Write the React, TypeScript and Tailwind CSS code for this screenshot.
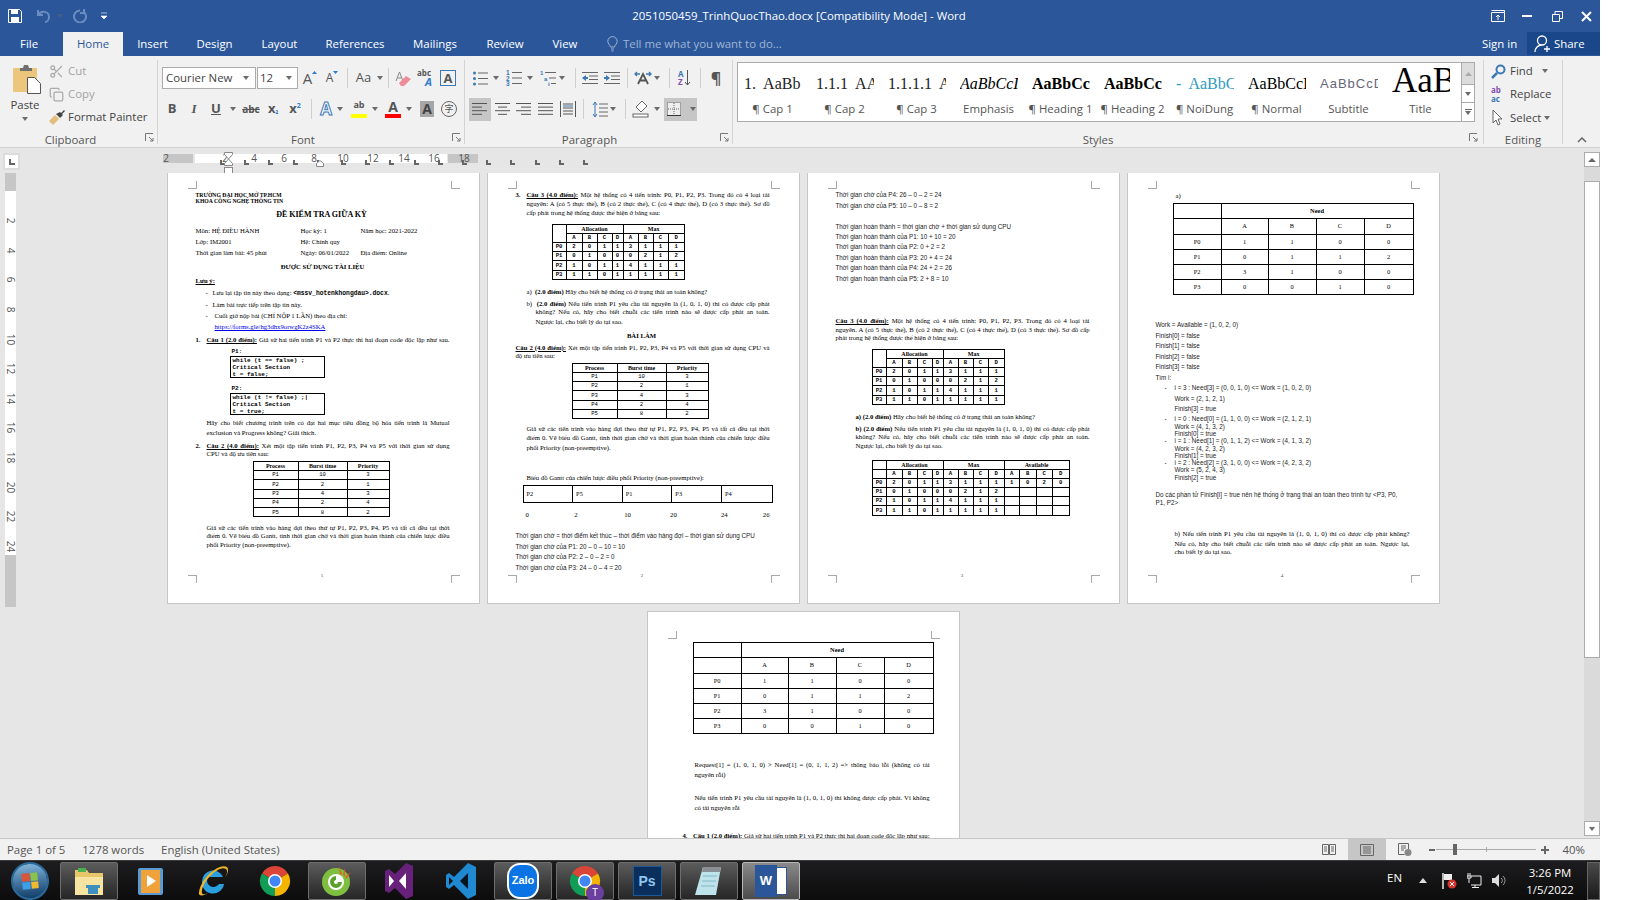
import React from "react";
import { Scissors, Copy } from "lucide-react";

const ui = "font-['Open_Sans','Liberation_Sans',sans-serif]";

const Caret = ({ className = "" }: { className?: string }) => (
  <svg width="8" height="4" viewBox="0 0 8 4" className={`shrink-0 ${className}`}>
    <path d="M1 0h6L4 4z" fill="#6b6b6b" />
  </svg>
);

const Divider = ({ className = "" }: { className?: string }) => (
  <div className={`w-px h-[20px] bg-[#cfcfcf] shrink-0 ${className}`} />
);

const Launcher = ({ className = "" }: { className?: string }) => (
  <svg width="9" height="9" viewBox="0 0 9 9" className={`absolute bottom-[2px] ${className}`}>
    <path d="M.5 8V.5H8M4 4l4 4M8 5v3H5" fill="none" stroke="#777" />
  </svg>
);

const Lines = ({ rows, className = "" }: { rows: number[][]; className?: string }) => (
  <svg width="16" height="14" viewBox="0 0 16 14" className={`shrink-0 ${className}`}>
    {rows.map((r, i) => (
      <line key={i} x1={r[0]} x2={r[1]} y1={1.5 + i * 3.6} y2={1.5 + i * 3.6} stroke="#555" />
    ))}
  </svg>
);

const ListIcon = ({ className = "" }: { className?: string }) => (
  <svg width="16" height="15" viewBox="0 0 16 15" className={`shrink-0 ${className}`}>
    {[2, 7.5, 13].map((y) => (
      <React.Fragment key={y}>
        <circle cx="2.5" cy={y} r="1.5" fill="#3c78b4" />
        <line x1="6" x2="16" y1={y} y2={y} stroke="#666" />
      </React.Fragment>
    ))}
  </svg>
);

const NumListIcon = ({ className = "" }: { className?: string }) => (
  <svg width="16" height="16" viewBox="0 0 16 16" className={`shrink-0 ${className}`}>
    {[
      { y: 2.5, t: "1" },
      { y: 8, t: "2" },
      { y: 13.5, t: "3" },
    ].map((r) => (
      <React.Fragment key={r.t}>
        <text x="0" y={r.y + 2.5} fontSize="6.5" fontWeight="700" fill="#3c78b4" fontFamily="Liberation Sans">{r.t}</text>
        <line x1="6" x2="16" y1={r.y} y2={r.y} stroke="#666" />
      </React.Fragment>
    ))}
  </svg>
);

const MultiListIcon = ({ className = "" }: { className?: string }) => (
  <svg width="16" height="16" viewBox="0 0 16 16" className={`shrink-0 ${className}`}>
    <text x="0" y="5" fontSize="6" fontWeight="700" fill="#3c78b4" fontFamily="Liberation Sans">1</text>
    <text x="4" y="10.500" fontSize="6" fontWeight="700" fill="#3c78b4" fontFamily="Liberation Sans">a</text>
    <text x="8" y="16" fontSize="6" fontWeight="700" fill="#3c78b4" fontFamily="Liberation Sans">i</text>
    <path d="M5 2.500h11M9 8h7M11 13.500h5" stroke="#666" />
  </svg>
);

const IndentIcon = ({ flip = false, className = "" }: { flip?: boolean; className?: string }) => (
  <svg width="16" height="14" viewBox="0 0 16 14" className={`shrink-0 ${className}`}>
    <path d="M0 1.500h16M7 5h9M7 8.500h9M0 12.500h16" stroke="#666" />
    {flip ? (
      <path d="M0 7l4-3v2h2v2H4v2z" fill="#3c78b4" />
    ) : (
      <path d="M6 7L2 4v2H0v2h2v2z" fill="#3c78b4" />
    )}
  </svg>
);

const TitleBar = () => (
  <div className={`relative h-[32px] flex items-center bg-[#2b579a] text-white ${ui}`}>
    <svg width="14" height="14" viewBox="0 0 14 14" className="ml-[8px]">
      <path d="M.5.5h11l2 2v11H.5z" fill="none" stroke="#fff" />
      <path d="M3 1h7v4H3zM3 8h8v5H3z" fill="#fff" />
    </svg>
    <svg width="17" height="14" viewBox="0 0 17 14" className="ml-[14px]">
      <path d="M2 6c3-5 11-4 11 2 0 3-2 5-4 5M2 1v5h5" fill="none" stroke="#6a8cc0" strokeWidth="2" />
    </svg>
    <Caret className="ml-[3px] opacity-40" />
    <svg width="14" height="14" viewBox="0 0 14 14" className="ml-[9px]">
      <path d="M11 3a6 6 0 1 1-4-1.5M11 0v4H7" fill="none" stroke="#6a8cc0" strokeWidth="2" />
    </svg>
    <svg width="8" height="8" viewBox="0 0 8 8" className="ml-[13px]">
      <path d="M1 1h6M1 4h6L4 7z" fill="#fff" stroke="#fff" strokeWidth=".6" />
    </svg>
    <div className="absolute left-[631px] w-[336px] text-center text-[11.4px] whitespace-nowrap">
      2051050459_TrinhQuocThao.docx [Compatibility Mode] - Word
    </div>
    <div className="ml-auto flex items-center">
      <svg width="14" height="12" viewBox="0 0 14 12">
        <path d="M.5 2.5h13v9H.5zM.5.5h13v2M7 10V5M5 7l2-2 2 2" fill="none" stroke="#fff" />
      </svg>
      <div className="ml-[17px] w-[10px] h-[2px] bg-white" />
      <svg width="11" height="11" viewBox="0 0 11 11" className="ml-[20px]">
        <path d="M.5 3.5h7v7h-7zM3 3V.5h7.5v7H8" fill="none" stroke="#fff" />
      </svg>
      <svg width="11" height="11" viewBox="0 0 11 11" className="ml-[18px] mr-[8px]">
        <path d="M1 1l9 9M10 1l-9 9" stroke="#fff" strokeWidth="2" />
      </svg>
    </div>
  </div>
);

const tabs = [
  { name: "Insert", w: "w-[59px]" },
  { name: "Design", w: "w-[65px]" },
  { name: "Layout", w: "w-[65px]" },
  { name: "References", w: "w-[86px]" },
  { name: "Mailings", w: "w-[74px]" },
  { name: "Review", w: "w-[66px]" },
  { name: "View", w: "w-[54px]" },
];

const TabBar = () => (
  <div className={`h-[24px] flex items-stretch bg-[#2b579a] text-white text-[11.4px] ${ui}`}>
    <div className="w-[63px] pl-[20px] flex items-center">File</div>
    <div className="w-[60px] bg-[#f1f1f1] text-[#2b579a] flex items-center justify-center">Home</div>
    {tabs.map((t) => (
      <div key={t.name} className={`${t.w} flex items-center justify-center`}>
        {t.name}
      </div>
    ))}
    <div className="ml-[15px] flex items-center text-[#9fb5d4]">
      <svg width="11" height="16" viewBox="0 0 11 16">
        <path d="M3.5 11C3 8.500.8 8 .8 5.300a4.700 4.700 0 0 1 9.400 0C10.200 8 8 8.500 7.500 11zM4 13h3M4.500 15h2" fill="none" stroke="#9fb5d4" />
      </svg>
      <span className="ml-[5px]">Tell me what you want to do...</span>
    </div>
    <div className="ml-auto w-[45px] flex items-center">Sign in</div>
    <div className="w-[73px] mb-px bg-[#19478a] flex items-center pl-[7px]">
      <svg width="16" height="18" viewBox="0 0 16 18">
        <path d="M8 1a4 4 0 0 1 0 9 4 4 0 0 1 0-9zM1 17c0-4 3-7 7-7M10 14h6M13 11v6" fill="none" stroke="#fff" strokeWidth="1.300" />
      </svg>
      <span className="ml-[4px]">Share</span>
    </div>
  </div>
);

const Clipboard = () => (
  <div className="relative w-[158px] border-r border-[#d4d4d4] mt-[4px] h-[84px] flex flex-col shrink-0">
    <div className="h-[72px] flex text-[11.4px] text-[#444]">
      <div className="w-[49px] flex flex-col items-center pt-[4px]">
        <svg width="29" height="30" viewBox="0 0 29 30" className="ml-[4px]">
          <rect x="1" y="4" width="24" height="24" rx="1" fill="#edc67e" />
          <path d="M8 4h3l1-3h4l1 3h3v3H8z" fill="#6f6f6f" />
          <path d="M15.500 13.500h7l6 6v10h-13z" fill="#fff" stroke="#555" />
        </svg>
        <span className="mt-[2px] leading-[17px] ml-[1px]">Paste</span>
        <Caret className="mt-[4px]" />
      </div>
      <div className="flex flex-col">
        <div className="h-[22px] flex items-center text-[#a3a3a3]">
          <Scissors size={15} className="w-[15px] text-[#aaa]" />
          <span className="ml-[4px]">Cut</span>
        </div>
        <div className="h-[24px] flex items-center text-[#a3a3a3]">
          <Copy size={15} className="text-[#aaa]" />
          <span className="ml-[4px]">Copy</span>
        </div>
        <div className="h-[22px] flex items-center">
          <svg width="16" height="15" viewBox="0 0 16 15">
            <path d="M0 11l6-6 4 4-6 6z" fill="#e3bd7c" />
            <path d="M7 4l4 4 3-3-1-1 3-3-1-1-3 3-1-1z" fill="#444" />
          </svg>
          <span className="ml-[3px] whitespace-nowrap">Format Painter</span>
        </div>
      </div>
    </div>
    <div className="h-[12px] leading-[16px] text-center text-[11.4px] text-[#555] pr-[16px]">Clipboard</div>
    <Launcher className="right-[3px]" />
  </div>
);

const FontGroup = () => (
  <div className="relative w-[307px] border-r border-[#d4d4d4] mt-[4px] h-[84px] flex flex-col shrink-0 text-[#555]">
    <div className="h-[72px] pt-[7px]">
      <div className="h-[22px] flex items-center pl-[4px]">
        <div className="w-[94px] h-[22px] bg-white border border-[#ababab] flex items-center px-[3px] text-[11.4px] text-[#444]">
          <span>Courier New</span>
          <Caret className="ml-auto mr-[2px]" />
        </div>
        <div className="ml-px w-[41px] h-[22px] bg-white border border-[#ababab] flex items-center px-[2px] text-[11.4px] text-[#444]">
          <span>12</span>
          <Caret className="ml-auto mr-[2px]" />
        </div>
        <div className="ml-[2px] w-[20px] flex items-start justify-center">
          <span className="text-[15px] leading-[18px]">A</span>
          <svg width="5" height="3" viewBox="0 0 5 3" className="mt-[2px]"><path d="M0 3l2.500-3L5 3z" fill="#2b7cd3" /></svg>
        </div>
        <div className="ml-[2px] w-[20px] flex items-start justify-center">
          <span className="text-[12px] leading-[18px]">A</span>
          <svg width="5" height="3" viewBox="0 0 5 3" className="mt-[2px]"><path d="M0 0h5L2.500 3z" fill="#2b7cd3" /></svg>
        </div>
        <Divider className="ml-[5px]" />
        <div className="ml-[4px] w-[23px] text-center text-[13px]">Aa</div>
        <Caret className="ml-px" />
        <Divider className="ml-[4px]" />
        <svg width="18" height="17" viewBox="0 0 18 17" className="ml-[6px]">
          <path d="M1 11L4.500 2 8 11M2.500 8h4" fill="none" stroke="#888" />
          <path d="M4 13l7-7 5 3-7 7H6z" fill="#f08c9a" />
        </svg>
        <div className="ml-[4px] w-[18px] h-[18px] flex flex-col items-start font-bold">
          <span className="text-[8px] leading-[8px]">abc</span>
          <span className="ml-[8px] text-[11px] leading-[10px] italic text-[#2b7cd3]">A</span>
        </div>
        <div className="ml-[5px] w-[16px] h-[16px] border border-[#3c78b4] text-[13px] leading-[14px] text-center font-bold">A</div>
      </div>
      <div className="mt-[9px] h-[22px] flex items-center pl-[7px] font-bold text-[13px]">
        <div className="w-[14px] text-center">B</div>
        <div className="ml-[8px] w-[14px] text-center italic font-['Liberation_Serif']">I</div>
        <div className="ml-[8px] w-[14px] text-center underline">U</div>
        <Caret className="ml-[6px]" />
        <div className="ml-[5px] w-[18px] text-center text-[10px] line-through">abc</div>
        <div className="ml-[5px] w-[16px] text-center">
          x<span className="text-[7px] text-[#2b7cd3]">₂</span>
        </div>
        <div className="ml-[6px] w-[16px] text-center">
          x<span className="text-[7px] align-super text-[#2b7cd3]">2</span>
        </div>
        <Divider className="ml-[8px]" />
        <div className="ml-[5px] w-[18px] text-center text-[17px] text-white [-webkit-text-stroke:1px_#3c78b4]">A</div>
        <Caret className="ml-px" />
        <div className="ml-[6px] w-[18px] relative h-[20px] text-[9px] leading-[11px] text-center">
          ab
          <div className="absolute left-[1px] right-[1px] bottom-[1px] h-[4px] bg-[#ffff00]" />
        </div>
        <Caret className="ml-[3px]" />
        <div className="ml-[6px] w-[16px] relative h-[20px] text-[14px] leading-[16px] text-center">
          A
          <div className="absolute left-0 right-0 bottom-[1px] h-[4px] bg-[#ff0000]" />
        </div>
        <Caret className="ml-[4px]" />
        <div className="ml-[7px] w-[14px] h-[16px] bg-[#a6a6a6] text-[14px] leading-[16px] text-center text-[#444]">A</div>
        <div className="ml-[7px] w-[16px] h-[16px] rounded-full border border-[#666] text-[9px] leading-[14px] text-center font-normal font-['Noto_Sans_CJK_SC',sans-serif]">
          字
        </div>
      </div>
    </div>
    <div className="h-[12px] leading-[16px] text-center text-[11.4px] pr-[16px]">Font</div>
    <Launcher className="right-[3px]" />
  </div>
);

const ParagraphGroup = () => (
  <div className="relative w-[268px] border-r border-[#d4d4d4] mt-[4px] h-[84px] flex flex-col shrink-0 text-[#555]">
    <div className="h-[72px] pt-[7px]">
      <div className="h-[22px] flex items-center pl-[7px]">
        <ListIcon />
        <Caret className="ml-[4px]" />
        <NumListIcon className="ml-[6px]" />
        <Caret className="ml-[4px]" />
        <MultiListIcon className="ml-[6px]" />
        <Caret className="ml-[2px]" />
        <Divider className="ml-[9px]" />
        <IndentIcon flip className="ml-[6px]" />
        <IndentIcon className="ml-[6px]" />
        <Divider className="ml-[7px]" />
        <svg width="18" height="16" viewBox="0 0 18 16" className="ml-[6px]">
          <path d="M4 14L9 4l5 10M6 10.500h6" fill="none" stroke="#555" strokeWidth="1.800" />
          <path d="M1 4h5M3 2L1 4l2 2M12 4h5M15 2l2 2-2 2" fill="none" stroke="#3c78b4" strokeWidth="1.300" />
        </svg>
        <Caret className="ml-px" />
        <Divider className="ml-[8px]" />
        <div className="ml-[8px] w-[16px] flex items-center">
          <div className="text-[8px] leading-[8px] font-bold">
            <div className="text-[#3c78b4]">A</div>
            <div className="text-[#7f4fb0]">Z</div>
          </div>
          <svg width="7" height="16" viewBox="0 0 7 16">
            <path d="M3.500 0v15M1 12l2.500 3L6 12" fill="none" stroke="#555" />
          </svg>
        </div>
        <Divider className="ml-[6px]" />
        <div className="ml-[7px] w-[16px] text-[16px] font-bold text-center">¶</div>
      </div>
      <div className="mt-[9px] h-[22px] flex items-center pl-[4px]">
        <div className="w-[22px] h-[23px] bg-[#c6c6c6] flex items-center justify-center">
          <Lines rows={[[0, 15], [0, 10], [0, 15], [0, 10]]} />
        </div>
        <Lines rows={[[0, 15], [3, 12], [0, 15], [3, 12]]} className="ml-[4px]" />
        <Lines rows={[[0, 15], [5, 15], [0, 15], [5, 15]]} className="ml-[5px]" />
        <Lines rows={[[0, 15], [0, 15], [0, 15], [0, 15]]} className="ml-[6px]" />
        <svg width="16" height="16" viewBox="0 0 16 16" className="ml-[6px]">
          <path d="M.5 0v16M15.500 0v16M3 3h10M3 7h10M3 10h10M3 13h10" fill="none" stroke="#555" />
          <path d="M3 5h10" stroke="#3c78b4" />
        </svg>
        <Divider className="ml-[7px]" />
        <svg width="16" height="17" viewBox="0 0 16 17" className="ml-[8px]">
          <path d="M3 1v15M1 4l2-3 2 3M1 13l2 3 2-3" fill="none" stroke="#3c78b4" />
          <path d="M7 3h9M7 7h9M7 11h9M7 15h9" stroke="#666" />
        </svg>
        <Caret className="ml-px" />
        <Divider className="ml-[8px]" />
        <svg width="18" height="18" viewBox="0 0 18 18" className="ml-[6px]">
          <path d="M4 7l6-6 5 5-6 6z" fill="#fff" stroke="#666" />
          <rect x="1" y="14" width="15" height="3" fill="#fff" stroke="#666" />
        </svg>
        <Caret className="ml-[3px]" />
        <div className="ml-[3px] w-[33px] h-[23px] bg-[#c6c6c6] flex items-center pl-[3px]">
          <svg width="14" height="14" viewBox="0 0 14 14">
            <rect x=".5" y=".5" width="13" height="13" fill="#eee" stroke="#666" strokeDasharray="1 1" />
            <path d="M7 1v12M1 7h12" stroke="#666" strokeDasharray="1 1" />
            <path d="M0 13.500h14" stroke="#333" />
          </svg>
          <Caret className="ml-[8px]" />
        </div>
      </div>
    </div>
    <div className="h-[12px] leading-[16px] text-center text-[11.4px] pr-[18px]">Paragraph</div>
    <Launcher className="right-[3px]" />
  </div>
);

const styleItems = [
  { label: "¶ Cap 1", prev: "1.  AaBb", cls: "text-[#222] text-[16px] leading-[42px] font-['Liberation_Serif']" },
  { label: "¶ Cap 2", prev: "1.1.1  AA", cls: "text-[#222] text-[16px] leading-[42px] font-['Liberation_Serif']" },
  { label: "¶ Cap 3", prev: "1.1.1.1  A", cls: "text-[#222] text-[16px] leading-[42px] font-['Liberation_Serif']" },
  { label: "Emphasis", prev: "AaBbCcI", cls: "text-black text-[16px] leading-[42px] italic font-['Liberation_Serif']" },
  { label: "¶ Heading 1", prev: "AaBbCcl", cls: "text-black text-[16px] leading-[42px] font-bold font-['Liberation_Serif']" },
  { label: "¶ Heading 2", prev: "AaBbCcl", cls: "text-black text-[16px] leading-[42px] font-bold font-['Liberation_Serif']" },
  { label: "¶ NoiDung", prev: "-  AaBbC", cls: "text-[#2e9bbf] text-[16px] leading-[42px] font-['Liberation_Serif']" },
  { label: "¶ Normal", prev: "AaBbCcI", cls: "text-black text-[16px] leading-[42px] font-['Liberation_Serif']" },
  { label: "Subtitle", prev: "AaBbCcD", cls: "text-[#66667a] text-[13px] leading-[42px] tracking-[1px] font-['Liberation_Sans']" },
  { label: "Title", prev: "AaB", cls: "text-black text-[35px] leading-[36px] font-['Liberation_Serif']" },
];

const StylesGroup = () => (
  <div className="relative w-[751px] border-r border-[#d4d4d4] mt-[4px] h-[84px] flex flex-col shrink-0">
    <div className="h-[72px] pl-[4px] pt-[2px]">
      <div className="w-[738px] h-[60px] bg-white border border-[#ababab] flex">
        <div className="w-[723px] flex shrink-0">
          {styleItems.map((s) => (
            <div key={s.label} className="w-[72px] shrink-0 flex flex-col">
              <div className={`ml-[6px] w-[58px] h-[36px] overflow-hidden whitespace-pre ${s.cls}`}>{s.prev}</div>
              <div className="mt-[1px] pr-[3px] text-center text-[11.4px] leading-[18px] text-[#555] whitespace-nowrap">{s.label}</div>
            </div>
          ))}
        </div>
        <div className="w-[14px] flex flex-col border-l border-[#ababab]">
          <div className="h-[21px] bg-[#dcdcdc] flex items-center justify-center">
            <svg width="7" height="4" viewBox="0 0 7 4"><path d="M0 4l3.500-4L7 4z" fill="#aaa" /></svg>
          </div>
          <div className="h-[19px] border-y border-[#ababab] flex items-center justify-center">
            <Caret />
          </div>
          <div className="h-[18px] flex flex-col items-center justify-center">
            <div className="w-[7px] h-px bg-[#666] mb-px" />
            <Caret />
          </div>
        </div>
      </div>
    </div>
    <div className="h-[12px] leading-[16px] text-center text-[11.4px] text-[#555] pr-[20px]">Styles</div>
    <Launcher className="right-[5px]" />
  </div>
);

const EditingGroup = () => (
  <div className="w-[79px] border-r border-[#d4d4d4] mt-[4px] h-[84px] flex flex-col shrink-0 text-[11.4px] text-[#444]">
    <div className="h-[72px] pl-[7px]">
      <div className="h-[22px] flex items-center">
        <svg width="15" height="15" viewBox="0 0 15 15">
          <circle cx="9.500" cy="5.500" r="4" fill="none" stroke="#3c78b4" strokeWidth="2" />
          <path d="M6 9l-5 5" stroke="#3c78b4" strokeWidth="2.500" />
        </svg>
        <span className="ml-[4px]">Find</span>
        <Caret className="ml-[8px]" />
      </div>
      <div className="h-[24px] flex items-center">
        <div className="w-[16px] text-[8px] leading-[9px] font-bold">
          <div className="text-[#7f4fb0]">ab</div>
          <div className="text-[#3c78b4]">ac</div>
        </div>
        <span className="ml-[3px]">Replace</span>
      </div>
      <div className="h-[23px] flex items-center">
        <svg width="14" height="17" viewBox="0 0 14 17" className="ml-px">
          <path d="M1 1v13l3-3 2 5 2-1-2-5h4z" fill="#fff" stroke="#666" />
        </svg>
        <span className="ml-[4px]">Select</span>
        <Caret className="ml-[2px]" />
      </div>
    </div>
    <div className="h-[12px] leading-[16px] text-center text-[#555]">Editing</div>
  </div>
);

const Ribbon = () => (
  <div className={`h-[92px] flex bg-[#f1f1f1] border-b border-[#d2d2d2] ${ui}`}>
    <Clipboard />
    <FontGroup />
    <ParagraphGroup />
    <StylesGroup />
    <EditingGroup />
    <div className="flex-1 flex items-end justify-center pb-[4px]">
      <svg width="10" height="6" viewBox="0 0 10 6">
        <path d="M1 5l4-4 4 4" fill="none" stroke="#666" strokeWidth="1.500" />
      </svg>
    </div>
  </div>
);

const rulerNums = [
  { t: "2", x: 3 }, { t: "2", x: 62 }, { t: "4", x: 91 }, { t: "6", x: 121 }, { t: "8", x: 151 },
  { t: "10", x: 180 }, { t: "12", x: 210 }, { t: "14", x: 241 }, { t: "16", x: 271 }, { t: "18", x: 301 },
];
const tabStops = Array.from({ length: 16 }, (_, i) => 57 + i * 24.2);

const HRuler = () => (
  <div className="h-[25px] flex shrink-0">
    <div className="ml-[3px] mt-[5px] w-[17px] h-[17px] bg-white border-[2px] border-[#dcdcdc] flex items-center justify-center">
      <div className="w-[6px] h-[6px] border-l-2 border-b-2 border-[#666]" />
    </div>
    <div className={`relative ml-[143px] mt-[6px] h-[9px] w-[315px] flex text-[10px] text-[#555] ${ui}`}>
      <div className="w-[30px] bg-[#c6c6c6]" />
      <div className="ml-[2px] w-[252px] bg-white" />
      <div className="ml-px w-[30px] bg-[#c6c6c6]" />
      {rulerNums.map((n, i) => (
        <span key={i} className="absolute top-[-3px] leading-[14px] -translate-x-1/2" style={{ left: n.x }}>
          {n.t}
        </span>
      ))}
      {tabStops.map((x) => (
        <div key={x} className="absolute top-[6px] w-[5px] h-[5px] border-l-2 border-b-2 border-[#666]" style={{ left: x }} />
      ))}
      <svg width="14" height="22" viewBox="0 0 14 22" className="absolute left-[60px] -top-[2px]">
        <path d="M1.500.500h8v2L5.500 7l-4-4.500zM5.500 7l4 4.500v2h-8v-2z" fill="#fff" stroke="#888" />
        <rect x="1.500" y="15.500" width="8" height="6" fill="#fff" stroke="#888" />
      </svg>
      <svg width="9" height="7" viewBox="0 0 9 7" className="absolute left-[153px] top-[6px]">
        <path d="M.500 6.500v-3l3.500-3 3.500 3v3z" fill="#fff" stroke="#888" />
      </svg>
    </div>
  </div>
);

const VRuler = () => (
  <div className={`ml-[5px] w-[11px] h-[434px] shrink-0 flex flex-col bg-white text-[10px] text-[#555] ${ui}`}>
    <div className="h-[18px] bg-[#c6c6c6]" />
    <div className="h-[364px] pt-[15px]">
      {[2, 4, 6, 8, 10, 12, 14, 16, 18, 20, 22, 24].map((n) => (
        <div key={n} className="h-[29.6px] flex items-center justify-center">
          <span className="rotate-90 whitespace-nowrap">{n}</span>
        </div>
      ))}
    </div>
    <div className="h-[52px] bg-[#c6c6c6]" />
  </div>
);

const CropMarks = () => (
  <>
    <div className="absolute left-[20px] top-[8px] w-[9px] h-[8px] border-r border-b border-[#a8a8a8]" />
    <div className="absolute left-[283px] top-[8px] w-[9px] h-[8px] border-l border-b border-[#a8a8a8]" />
    <div className="absolute left-[20px] top-[402px] w-[9px] h-[8px] border-r border-t border-[#a8a8a8]" />
    <div className="absolute left-[283px] top-[402px] w-[9px] h-[8px] border-l border-t border-[#a8a8a8]" />
  </>
);

const Line = ({ className = "", children }: { className?: string; children: React.ReactNode }) => (
  <div className={`h-[6px] leading-[6px] whitespace-nowrap shrink-0 ${className}`}>{children}</div>
);

// justified body line, Word spreads these out to the right margin
const Just = ({ className = "", children }: { className?: string; children: React.ReactNode }) => (
  <div className={`h-[6px] leading-[6px] text-justify [text-align-last:justify] shrink-0 ${className}`}>{children}</div>
);

const Sans = ({ className = "", children }: { className?: string; children: React.ReactNode }) => (
  <Line className={`font-['Liberation_Sans'] text-[6.300px] text-[#222] ${className}`}>{children}</Line>
);

const PageNum = ({ n }: { n: number }) => (
  <div className="mt-auto mb-[24px] h-[6px] leading-[6px] text-center text-[5px] text-[#444] -ml-[1px]">{n}</div>
);

const Page = ({ className = "", children }: { className?: string; children: React.ReactNode }) => (
  <div className={`relative w-[313px] h-[431px] bg-white border-r border-b border-l border-[#c6c6c6] overflow-hidden flex flex-col pl-[28px] pr-[29px] shrink-0 font-['Liberation_Serif'] text-[6.700px] text-black ${className}`}>
    {children}
  </div>
);

const Td = ({ className = "", children, ...rest }: React.TdHTMLAttributes<HTMLTableCellElement>) => (
  <td className={`border border-black p-0 text-center align-middle leading-none ${className}`} {...rest}>
    {children}
  </td>
);

const procRows = [
  ["P1", "10", "3"],
  ["P2", "2", "1"],
  ["P3", "4", "3"],
  ["P4", "2", "4"],
  ["P5", "8", "2"],
];

const ProcTable = ({ className = "" }: { className?: string }) => (
  <table className={`table-fixed border-collapse w-[136px] shrink-0 border-[1.5px] border-black ${className}`}>
    <colgroup>
      <col className="w-[45px]" />
      <col className="w-[49px]" />
      <col className="w-[42px]" />
    </colgroup>
    <tbody>
      <tr className="h-[9px] font-bold text-[6px]">
        <Td>Process</Td>
        <Td>Burst time</Td>
        <Td>Priority</Td>
      </tr>
      {procRows.map((r) => (
        <tr key={r[0]} className="h-[9.3px] text-[5.600px] font-['Liberation_Mono']">
          {r.map((c, i) => (
            <Td key={i}>{c}</Td>
          ))}
        </tr>
      ))}
    </tbody>
  </table>
);

const allocRows = [
  ["P0", "2", "0", "1", "1", "3", "1", "1", "1"],
  ["P1", "0", "1", "0", "0", "0", "2", "1", "2"],
  ["P2", "1", "0", "1", "1", "4", "1", "1", "1"],
  ["P3", "1", "1", "0", "1", "1", "1", "1", "1"],
];
const avail = [["1", "0", "2", "0"], ["", "", "", ""], ["", "", "", ""], ["", "", "", ""]];

const AllocTable = ({ withAvail = false, className = "" }: { withAvail?: boolean; className?: string }) => (
  <table className={`table-fixed border-collapse shrink-0 border-[1.5px] border-black ${withAvail ? "w-[197px]" : "w-[132px]"} ${className}`}>
    <colgroup>
      <col className="w-[14px]" />
      <col className="w-[16px]" />
      <col className="w-[15px]" />
      <col className="w-[15px]" />
      <col className="w-[11px]" />
      <col className="w-[15px]" />
      <col className="w-[15px]" />
      <col className="w-[15px]" />
      <col className="w-[16px]" />
      {withAvail && (
        <>
          <col className="w-[15px]" />
          <col className="w-[17px]" />
          <col className="w-[16px]" />
          <col className="w-[17px]" />
        </>
      )}
    </colgroup>
    <tbody>
      <tr className="h-[9px] font-bold text-[6px]">
        {withAvail ? <Td /> : <Td rowSpan={2} />}
        <Td colSpan={4}>Allocation</Td>
        <Td colSpan={4}>Max</Td>
        {withAvail && <Td colSpan={4}>Available</Td>}
      </tr>
      <tr className="h-[9px] font-bold text-[5.600px] font-['Liberation_Mono']">
        {withAvail && <Td />}
        {["A", "B", "C", "D", "A", "B", "C", "D"].map((c, i) => (
          <Td key={i}>{c}</Td>
        ))}
        {withAvail && ["A", "B", "C", "D"].map((c) => <Td key={c}>{c}</Td>)}
      </tr>
      {allocRows.map((r, ri) => (
        <tr key={r[0]} className="h-[9.2px] text-[5.600px] font-['Liberation_Mono'] font-bold">
          {r.map((c, i) => (
            <Td key={i}>{c}</Td>
          ))}
          {withAvail && avail[ri].map((c, i) => <Td key={i}>{c}</Td>)}
        </tr>
      ))}
    </tbody>
  </table>
);

const needRows = [
  ["P0", "1", "1", "0", "0"],
  ["P1", "0", "1", "1", "2"],
  ["P2", "3", "1", "0", "0"],
  ["P3", "0", "0", "1", "0"],
];

const NeedTable = ({ className = "" }: { className?: string }) => (
  <table className={`table-fixed border-collapse w-[240px] shrink-0 border-[1.5px] border-black text-[6.400px] ${className}`}>
    <colgroup>
      <col className="w-[48px]" />
      <col className="w-[47px]" />
      <col className="w-[48px]" />
      <col className="w-[48px]" />
      <col className="w-[49px]" />
    </colgroup>
    <tbody>
      <tr className="h-[15px]">
        <Td />
        <Td colSpan={4} className="font-bold">Need</Td>
      </tr>
      <tr className="h-[16px]">
        <Td />
        <Td>A</Td>
        <Td>B</Td>
        <Td>C</Td>
        <Td>D</Td>
      </tr>
      {needRows.map((r) => (
        <tr key={r[0]} className="h-[15px]">
          {r.map((c, i) => (
            <Td key={i}>{c}</Td>
          ))}
        </tr>
      ))}
    </tbody>
  </table>
);

const CodeBox = ({ lines, className = "" }: { lines: string[]; className?: string }) => (
  <div className={`ml-[34px] w-[95px] h-[22px] border border-black font-['Liberation_Mono'] font-bold text-[6px] pl-[2px] flex flex-col justify-center shrink-0 ${className}`}>
    {lines.map((l) => (
      <div key={l} className="h-[7px] leading-[7px] whitespace-pre">{l}</div>
    ))}
  </div>
);

const Page1 = () => (
  <Page className="pt-[19px]">
    <CropMarks />
    <Line className="font-bold text-[5.700px]">TRƯỜNG ĐẠI HỌC MỞ TP.HCM</Line>
    <Line className="font-bold text-[5.700px]">KHOA CÔNG NGHỆ THÔNG TIN</Line>
    <Line className="mt-[8px] font-bold text-center text-[8px] pr-[2px]">ĐỀ KIỂM TRA GIỮA KỲ</Line>
    <Line className="mt-[10px] flex"><span className="w-[105px]">Môn: HỆ ĐIỀU HÀNH</span><span className="w-[60px]">Học kỳ: 1</span><span>Năm học: 2021-2022</span></Line>
    <Line className="mt-[5px] flex"><span className="w-[105px]">Lớp: IM2001</span><span>Hệ: Chính quy</span></Line>
    <Line className="mt-[5px] flex"><span className="w-[105px]">Thời gian làm bài: 45 phút</span><span className="w-[60px]">Ngày: 06/01/2022</span><span>Địa điểm: Online</span></Line>
    <Line className="mt-[8px] font-bold text-center">ĐƯỢC SỬ DỤNG TÀI LIỆU</Line>
    <Line className="mt-[8px] font-bold underline">Lưu ý:</Line>
    <Line className="mt-[6px] pl-[10px] flex"><span className="w-[7px]">-</span><span>Lưu lại tập tin này theo dạng: <span className="font-['Liberation_Mono'] text-[6.300px] font-bold">&lt;mssv_hotenkhongdau&gt;.docx</span>.</span></Line>
    <Line className="mt-[6px] pl-[10px] flex"><span className="w-[7px]">-</span><span>Làm bài trực tiếp trên tập tin này.</span></Line>
    <Line className="mt-[5px] pl-[10px] flex"><span className="w-[9px]">-</span><span>Cuối giờ nộp bài (CHỈ NỘP 1 LẦN) theo địa chỉ:</span></Line>
    <Line className="mt-[5px] pl-[19px] text-[#0000ee] underline">https://forms.gle/hg3dhx9orwgK2z4SKA</Line>
    <Line className="mt-[7px] flex"><span className="w-[11px] font-bold">1.</span><Just className="flex-1"><span className="font-bold underline">Câu 1 (2.0 điểm):</span> Giả sử hai tiến trình P1 và P2 thực thi hai đoạn code độc lập như sau.</Just></Line>
    <Line className="mt-[6px] pl-[36px] font-bold font-['Liberation_Mono'] text-[6px]">P1:</Line>
    <CodeBox className="mt-[1px]" lines={["while (t == false) ;", "Critical Section", "t = false;"]} />
    <Line className="mt-[8px] pl-[36px] font-bold font-['Liberation_Mono'] text-[6px]">P2:</Line>
    <CodeBox className="mt-[1px]" lines={["while (t != false) ;|", "Critical Section", "t = true;"]} />
    <Just className="mt-[5px] ml-[11px]">Hãy cho biết chương trình trên có đạt hai mục tiêu đồng bộ hóa tiến trình là Mutual</Just>
    <Line className="mt-[4px] ml-[11px]">exclusion và Progress không? Giải thích.</Line>
    <Line className="mt-[7px] flex"><span className="w-[11px] font-bold">2.</span><Just className="flex-1"><span className="font-bold underline">Câu 2 (4.0 điểm):</span> Xét một tập tiến trình P1, P2, P3, P4 và P5 với thời gian sử dụng</Just></Line>
    <Line className="mt-[2px] ml-[11px]">CPU và độ ưu tiên sau:</Line>
    <ProcTable className="mt-[4px] ml-[57px]" />
    <Just className="mt-[8px] ml-[11px]">Giả sử các tiến trình vào hàng đợi theo thứ tự P1, P2, P3, P4, P5 và tất cả đều tại thời</Just>
    <Just className="mt-[2px] ml-[11px]">điểm 0. Vẽ biểu đồ Gantt, tính thời gian chờ và thời gian hoàn thành của chiến lược điều</Just>
    <Line className="mt-[3px] ml-[11px]">phối Priority (non-preemptive).</Line>
    <PageNum n={1} />
  </Page>
);

const Page2 = () => (
  <Page className="pt-[19px]">
    <CropMarks />
    <Line className="flex"><span className="w-[11px] font-bold">3.</span><Just className="flex-1"><span className="font-bold underline">Câu 3 (4.0 điểm):</span> Một hệ thống có 4 tiến trình: P0, P1, P2, P3. Trong đó có 4 loại tài</Just></Line>
    <Just className="mt-[3px] ml-[11px]">nguyên: A (có 5 thực thể), B (có 2 thực thể), C (có 4 thực thể), D (có 3 thực thể). Sơ đồ</Just>
    <Line className="mt-[3px] ml-[11px]">cấp phát trong hệ thống được thể hiện ở bảng sau:</Line>
    <AllocTable className="mt-[8px] ml-[36px]" />
    <Line className="mt-[9px] ml-[11px]">a)&nbsp;&nbsp;<span className="font-bold">(2.0 điểm)</span> Hãy cho biết hệ thống có ở trạng thái an toàn không?</Line>
    <Just className="mt-[6px] ml-[11px]">b)&nbsp;&nbsp;<span className="font-bold">(2.0 điểm)</span> Nếu tiến trình P1 yêu cầu tài nguyên là (1, 0, 1, 0) thì có được cấp phát</Just>
    <Just className="mt-[2px] ml-[20px]">không? Nếu có, hãy cho biết chuỗi các tiến trình nào sẽ được cấp phát an toàn.</Just>
    <Line className="mt-[4px] ml-[20px]">Ngược lại, cho biết lý do tại sao.</Line>
    <Line className="mt-[8px] font-bold text-center pr-[2px]">BÀI LÀM</Line>
    <Just className="mt-[6px]"><span className="font-bold underline">Câu 2 (4.0 điểm):</span> Xét một tập tiến trình P1, P2, P3, P4 và P5 với thời gian sử dụng CPU và</Just>
    <Line className="mt-[2px]">độ ưu tiên sau:</Line>
    <ProcTable className="mt-[4px] ml-[56px]" />
    <Just className="mt-[7px] ml-[11px]">Giả sử các tiến trình vào hàng đợi theo thứ tự P1, P2, P3, P4, P5 và tất cả đều tại thời</Just>
    <Just className="mt-[3px] ml-[11px]">điểm 0. Vẽ biểu đồ Gantt, tính thời gian chờ và thời gian hoàn thành của chiến lược điều</Just>
    <Line className="mt-[4px] ml-[11px]">phối Priority (non-preemptive).</Line>
    <Line className="mt-[24px] ml-[11px]">Biểu đồ Gantt của chiến lược điều phối Priority (non-preemptive):</Line>
    <div className="mt-[4px] ml-[7px] w-[250px] h-[18px] flex border border-black shrink-0 text-[6.400px]">
      {["P2", "P5", "P1", "P3", "P4"].map((p, i) => (
        <div key={p} className={`w-[50px] flex items-center pl-[3px] ${i < 4 ? "border-r border-black" : ""}`}>{p}</div>
      ))}
    </div>
    <Line className="mt-[9px] ml-[10px] flex">
      <span className="w-[49px]">0</span>
      <span className="w-[50px]">2</span>
      <span className="w-[46px]">10</span>
      <span className="w-[51px]">20</span>
      <span className="w-[42px]">24</span>
      <span>26</span>
    </Line>
    <Sans className="mt-[15px]">Thời gian chờ = thời điểm kết thúc – thời điểm vào hàng đợi – thời gian sử dụng CPU</Sans>
    <Sans className="mt-[5px]">Thời gian chờ của P1: 20 – 0 – 10 = 10</Sans>
    <Sans className="mt-[4px]">Thời gian chờ của P2: 2 – 0 – 2 = 0</Sans>
    <Sans className="mt-[5px]">Thời gian chờ của P3: 24 – 0 – 4 = 20</Sans>
    <PageNum n={2} />
  </Page>
);

const Page3 = () => (
  <Page className="pt-[19px]">
    <CropMarks />
    <Sans>Thời gian chờ của P4: 26 – 0 – 2 = 24</Sans>
    <Sans className="mt-[5px]">Thời gian chờ của P5: 10 – 0 – 8 = 2</Sans>
    <Sans className="mt-[15px]">Thời gian hoàn thành = thời gian chờ + thời gian sử dụng CPU</Sans>
    <Sans className="mt-[4px]">Thời gian hoàn thành của P1: 10 + 10 = 20</Sans>
    <Sans className="mt-[4px]">Thời gian hoàn thành của P2: 0 + 2 = 2</Sans>
    <Sans className="mt-[5px]">Thời gian hoàn thành của P3: 20 + 4 = 24</Sans>
    <Sans className="mt-[4px]">Thời gian hoàn thành của P4: 24 + 2 = 26</Sans>
    <Sans className="mt-[5px]">Thời gian hoàn thành của P5: 2 + 8 = 10</Sans>
    <Just className="mt-[36px]"><span className="font-bold underline">Câu 3 (4.0 điểm):</span> Một hệ thống có 4 tiến trình: P0, P1, P2, P3. Trong đó có 4 loại tài</Just>
    <Just className="mt-[3px]">nguyên. A (có 5 thực thể), B (có 2 thực thể), C (có 4 thực thể), D (có 3 thực thể). Sơ đồ cấp</Just>
    <Line className="mt-[2px]">phát trong hệ thống được thể hiện ở bảng sau:</Line>
    <AllocTable className="mt-[8px] ml-[36px]" />
    <Line className="mt-[9px] ml-[20px]"><span className="font-bold">a) (2.0 điểm)</span> Hãy cho biết hệ thống có ở trạng thái an toàn không?</Line>
    <Just className="mt-[6px] ml-[20px]"><span className="font-bold">b) (2.0 điểm)</span> Nếu tiến trình P1 yêu cầu tài nguyên là (1, 0, 1, 0) thì có được cấp phát</Just>
    <Just className="mt-[2px] ml-[20px]">không? Nếu có, hãy cho biết chuỗi các tiến trình nào sẽ được cấp phát an toàn.</Just>
    <Line className="mt-[3px] ml-[20px]">Ngược lại, cho biết lý do tại sao.</Line>
    <AllocTable withAvail className="mt-[11px] ml-[36px]" />
    <PageNum n={3} />
  </Page>
);

const Page4 = () => (
  <Page className="pt-[20px]">
    <CropMarks />
    <Line className="ml-[20px]">a)</Line>
    <NeedTable className="mt-[4px] ml-[17px]" />
    <Sans className="mt-[27px]">Work = Available = (1, 0, 2, 0)</Sans>
    <Sans className="mt-[5px]">Finish[0] = false</Sans>
    <Sans className="mt-[4px]">Finish[1] = false</Sans>
    <Sans className="mt-[5px]">Finish[2] = false</Sans>
    <Sans className="mt-[4px]">Finish[3] = false</Sans>
    <Sans className="mt-[5px]">Tìm i:</Sans>
    <Sans className="mt-[4px] ml-[9px] flex"><span className="w-[10px]">-</span>i = 3 : Need[3] = (0, 0, 1, 0) &lt;= Work = (1, 0, 2, 0)</Sans>
    <Sans className="mt-[5px] ml-[19px]">Work = (2, 1, 2, 1)</Sans>
    <Sans className="mt-[4px] ml-[19px]">Finish[3] = true</Sans>
    <Sans className="mt-[4px] ml-[9px] flex"><span className="w-[10px]">-</span>i = 0 : Need[0] = (1, 1, 0, 0) &lt;= Work = (2, 1, 2, 1)</Sans>
    <Sans className="mt-[2px] ml-[19px]">Work = (4, 1, 3, 2)</Sans>
    <Sans className="mt-[1px] ml-[19px]">Finish[0] = true</Sans>
    <Sans className="mt-[1px] ml-[9px] flex"><span className="w-[10px]">-</span>i = 1 : Need[1] = (0, 1, 1, 2) &lt;= Work = (4, 1, 3, 2)</Sans>
    <Sans className="mt-[2px] ml-[19px]">Work = (4, 2, 3, 2)</Sans>
    <Sans className="mt-[1px] ml-[19px]">Finish[1] = true</Sans>
    <Sans className="mt-[1px] ml-[9px] flex"><span className="w-[10px]">-</span>i = 2 : Need[2] = (3, 1, 0, 0) &lt;= Work = (4, 2, 3, 2)</Sans>
    <Sans className="mt-[1px] ml-[19px]">Work = (5, 2, 4, 3)</Sans>
    <Sans className="mt-[2px] ml-[19px]">Finish[2] = true</Sans>
    <Sans className="mt-[11px]">Do các phần tử Finish[i] = true nên hệ thống ở trạng thái an toàn theo trình tự &lt;P3, P0,</Sans>
    <Sans className="mt-[2px]">P1, P2&gt;</Sans>
    <Just className="mt-[25px] ml-[19px]">b) Nếu tiến trình P1 yêu cầu tài nguyên là (1, 0, 1, 0) thì có được cấp phát không?</Just>
    <Just className="mt-[4px] ml-[19px]">Nếu có, hãy cho biết chuỗi các tiến trình nào sẽ được cấp phát an toàn. Ngược lại,</Just>
    <Line className="mt-[2px] ml-[19px]">cho biết lý do tại sao.</Line>
    <PageNum n={4} />
  </Page>
);

const Page5 = () => (
  <Page className="h-[441px] border-t pt-[30px]">
    <div className="absolute left-[20px] top-[19px] w-[9px] h-[8px] border-r border-b border-[#a8a8a8]" />
    <div className="absolute left-[283px] top-[19px] w-[9px] h-[8px] border-l border-b border-[#a8a8a8]" />
    <NeedTable className="ml-[17px]" />
    <Just className="mt-[28px] ml-[19px]">Request[1] = (1, 0, 1, 0) &gt; Need[1] = (0, 1, 1, 2) =&gt; thông báo lỗi (không có tài</Just>
    <Line className="mt-[4px] ml-[19px]">nguyên rỗi)</Line>
    <Just className="mt-[17px] ml-[19px]">Nếu tiến trình P1 yêu cầu tài nguyên là (1, 0, 1, 0) thì không được cấp phát. Vì không</Just>
    <Line className="mt-[4px] ml-[19px]">có tài nguyên rỗi</Line>
    <Line className="mt-[22px] ml-[7px] flex font-bold"><span className="w-[12px]">4.</span><span><span>Câu 1 (2.0 điểm):</span> <span className="font-normal">Giả sử hai tiến trình P1 và P2 thực thi hai đoạn code độc lập như sau:</span></span></Line>
  </Page>
);

const Scrollbar = () => (
  <div className="w-[16px] shrink-0 flex flex-col pt-[4px] bg-[#e6e6e6]">
    <div className="h-[15px] bg-white border border-[#ababab] flex items-center justify-center">
      <svg width="8" height="4" viewBox="0 0 8 4"><path d="M0 4l4-4 4 4z" fill="#666" /></svg>
    </div>
    <div className="flex-1 bg-[#dadada] pt-[14px]">
      <div className="h-[477px] bg-white border border-[#ababab]" />
    </div>
    <div className="h-[15px] bg-white border border-[#ababab] flex items-center justify-center">
      <Caret />
    </div>
    <div className="h-[2px]" />
  </div>
);

const StatusBar = () => (
  <div className={`h-[22px] flex items-center bg-[#f1f1f1] border-t border-[#c6c6c6] text-[11.4px] text-[#555] ${ui}`}>
    <span className="ml-[7px]">Page 1 of 5</span>
    <span className="ml-[17px]">1278 words</span>
    <span className="ml-[17px]">English (United States)</span>
    <div className="ml-auto flex items-center h-full">
      <svg width="14" height="13" viewBox="0 0 14 13">
        <path d="M.5 1.500h6v10h-6zM7.500 1.500h6v10h-6zM2 4h3M2 6h3M2 8h3M9 4h3M9 6h3M9 8h3" fill="none" stroke="#666" />
      </svg>
      <div className="ml-[12px] w-[38px] h-full bg-[#c6c6c6] flex items-center justify-center">
        <svg width="14" height="12" viewBox="0 0 14 12">
          <path d="M.5.500h13v11H.5zM3 3h8M3 5h8M3 7h8M3 9h8" fill="none" stroke="#666" />
        </svg>
      </div>
      <svg width="14" height="13" viewBox="0 0 14 13" className="ml-[12px]">
        <path d="M.5.500h10v7M.5.500v11h6M3 3h5M3 5h5M3 7h3" fill="none" stroke="#666" />
        <circle cx="10" cy="9.500" r="3.500" fill="#888" />
      </svg>
      <div className="ml-[17px] w-[6px] h-[2px] bg-[#666]" />
      <div className="relative ml-[1px] w-[100px] h-px bg-[#aaa]">
        <div className="absolute left-[17px] -top-[5px] w-[4px] h-[11px] bg-[#666]" />
        <div className="absolute left-[50px] -top-[2px] w-px h-[5px] bg-[#aaa]" />
      </div>
      <div className="ml-[5px] relative w-[8px] h-[8px]">
        <div className="absolute left-0 top-[3px] w-[8px] h-[2px] bg-[#666]" />
        <div className="absolute left-[3px] top-0 w-[2px] h-[8px] bg-[#666]" />
      </div>
      <span className="ml-[14px] mr-[15px]">40%</span>
    </div>
  </div>
);

const ChromeIcon = () => (
  <svg width="32" height="32" viewBox="0 0 32 32">
    <path d="M16 16L3 8.500A15 15 0 0 1 29 8.500z" fill="#db4437" />
    <path d="M16 16L29 8.500A15 15 0 0 1 16 31z" fill="#f4b400" />
    <path d="M16 16L16 31A15 15 0 0 1 3 8.500z" fill="#0f9d58" />
    <circle cx="16" cy="16" r="7" fill="#fff" />
    <circle cx="16" cy="16" r="5.500" fill="#4285f4" />
  </svg>
);

const taskIcons: { framed: boolean; active?: boolean; icon: React.ReactNode }[] = [
  {
    framed: true,
    icon: (
      <svg width="32" height="30" viewBox="0 0 32 30">
        <path d="M2 4h12l2 3h14v22H2z" fill="#e8c66a" />
        <path d="M5 2h8v4H5z" fill="#4caf50" />
        <path d="M2 11h28v18H2z" fill="#f6e4a0" />
        <path d="M13 19h14v3h-2v6H15v-6h-2z" fill="#3f8fbf" />
      </svg>
    ),
  },
  {
    framed: false,
    icon: (
      <svg width="28" height="32" viewBox="0 0 28 32">
        <rect x="1" y="3" width="25" height="27" rx="2" fill="#5b9bd5" />
        <rect x="4" y="5" width="19" height="23" fill="#f0a23a" />
        <path d="M10 10l9 6-9 6z" fill="#fff" />
      </svg>
    ),
  },
  {
    framed: false,
    icon: (
      <svg width="34" height="34" viewBox="0 0 34 34">
        <path d="M6 17a11 11 0 0 1 21-4H12a6 6 0 0 0 11 7h5A11 11 0 0 1 6 17z" fill="#2a9fe0" />
        <path d="M31 3C24-1 6 12 3 28c-1 5 5 4 9 1C8 31 5 31 6 26 9 14 24 1 30 5c2 2 1 5-1 8 3-3 4-8 2-10z" fill="#f0b429" />
      </svg>
    ),
  },
  { framed: false, icon: <ChromeIcon /> },
  {
    framed: true,
    icon: (
      <svg width="32" height="34" viewBox="0 0 32 34">
        <circle cx="15" cy="18" r="14" fill="#7fbf3f" />
        <circle cx="15" cy="18" r="8" fill="#fff" />
        <path d="M15 12a6 6 0 1 0 6 6h-4a2 2 0 1 1-2-2z" fill="#5aa02c" />
        <path d="M18 2l3 8-2 1zM24 4l-2 7 2 1zM30 8l-6 5 1 2z" fill="#ef5a24" />
      </svg>
    ),
  },
  {
    framed: false,
    icon: (
      <svg width="30" height="38" viewBox="0 0 30 38">
        <path d="M22 1l7 3v30l-7 3-11-11-6 5-4-2V9l4-2 6 5z" fill="#68217a" />
        <path d="M22 11l-7 8 7 8zM5 13v12l5-6z" fill="#fff" />
      </svg>
    ),
  },
  {
    framed: false,
    icon: (
      <svg width="32" height="38" viewBox="0 0 32 38">
        <path d="M23 1l8 4v28l-8 4L9 23l-5 4-3-2V13l3-2 5 4z" fill="#1f8ad2" />
        <path d="M23 11l-8 8 8 8zM4 15v8l4-4z" fill="#000" fillOpacity=".85" />
      </svg>
    ),
  },
  {
    framed: true,
    icon: (
      <div className="w-[32px] h-[36px] rounded-[13px] bg-[#0b74e5] border-2 border-white flex items-center justify-center font-['Liberation_Sans'] text-white text-[11px] font-bold">
        Zalo
      </div>
    ),
  },
  {
    framed: true,
    icon: (
      <div className="relative">
        <ChromeIcon />
        <div className="absolute -right-[3px] -bottom-[5px] w-[18px] h-[18px] rounded-full bg-[#6b3fa0] text-white text-[10px] text-center leading-[18px] font-['Liberation_Sans']">T</div>
      </div>
    ),
  },
  {
    framed: true,
    icon: (
      <div className="w-[29px] h-[30px] bg-[#0a2f5c] border border-[#1c5a96] text-[#8fc6f2] text-[14px] font-bold text-center leading-[28px] font-['Liberation_Sans']">Ps</div>
    ),
  },
  {
    framed: true,
    icon: (
      <svg width="32" height="34" viewBox="0 0 32 34">
        <path d="M10 3h18l-5 28H2z" fill="#bfe3ea" />
        <path d="M10 3h18l-1 5H9z" fill="#8a8f94" />
        <path d="M10 12h14M9 17h14M8 22h14" stroke="#7fb7c6" />
      </svg>
    ),
  },
  {
    framed: true,
    active: true,
    icon: (
      <div className="relative w-[32px] h-[32px]">
        <div className="absolute right-0 top-[2px] w-[22px] h-[28px] bg-white border border-[#2b579a]" />
        <div className="absolute left-0 top-0 w-[22px] h-[32px] bg-[#2b579a] text-white text-[13px] font-bold flex items-center justify-center font-['Liberation_Sans']">W</div>
      </div>
    ),
  },
];

const Taskbar = () => (
  <div className={`h-[40px] flex items-center bg-gradient-to-b from-[#1d1d1f] to-[#0c0c0d] border-t border-[#3a3a3a] ${ui}`}>
    <div className="w-[60px] shrink-0 flex items-center justify-center">
      <div className="w-[38px] h-[38px] rounded-full bg-gradient-to-b from-[#7fb4d8] to-[#123f6b] border-2 border-[#2a6a9a] grid grid-cols-2 gap-px p-[9px] rotate-[-6deg]">
        <div className="bg-[#d9553a]" />
        <div className="bg-[#8bc34a]" />
        <div className="bg-[#3ca0e8]" />
        <div className="bg-[#f0b92e]" />
      </div>
    </div>
    <div className="flex gap-[4px]">
      {taskIcons.map((t, i) => (
        <div
          key={i}
          className={`w-[58px] h-[38px] flex items-center justify-center rounded-[2px] ${
            t.active
              ? "border border-[#b8b8b8] bg-gradient-to-b from-[#8a8a8a] to-[#4c4c4c]"
              : t.framed
                ? "border border-[#6e6e6e] bg-gradient-to-b from-[#5c5c5c] to-[#262626]"
                : ""
          }`}
        >
          {t.icon}
        </div>
      ))}
    </div>
    <div className="ml-auto flex items-center text-white text-[11.4px]">
      <span className="-mt-[6px]">EN</span>
      <svg width="8" height="5" viewBox="0 0 8 5" className="ml-[17px]"><path d="M0 5l4-5 4 5z" fill="#ddd" /></svg>
      <svg width="15" height="16" viewBox="0 0 15 16" className="ml-[15px]">
        <path d="M1 0v16" stroke="#eee" strokeWidth="1.500" />
        <path d="M2 1h8v6H2z" fill="#eee" />
        <circle cx="10" cy="11" r="4.500" fill="#d9342b" />
        <path d="M8 9l4 4M12 9l-4 4" stroke="#fff" />
      </svg>
      <svg width="15" height="15" viewBox="0 0 15 15" className="ml-[10px]">
        <path d="M4 3h10v9H4M8 12v2M5 14.500h7M1 0v3M3 0v3M0 3h4v2H0zM2 5v5" fill="none" stroke="#eee" />
      </svg>
      <svg width="14" height="13" viewBox="0 0 14 13" className="ml-[10px]">
        <path d="M0 4h3l4-4v13l-4-4H0z" fill="#ddd" />
        <path d="M9 4a3 3 0 0 1 0 5M11 2a6 6 0 0 1 0 9" fill="none" stroke="#999" />
      </svg>
      <div className="ml-[14px] w-[60px] text-center leading-[17px]">
        <div>3:26 PM</div>
        <div>1/5/2022</div>
      </div>
      <div className="ml-[7px] w-[13px] h-[38px] border border-[#666] bg-gradient-to-b from-[#4a4a4a] to-[#1a1a1a]" />
    </div>
  </div>
);

export default function App() {
  return (
    <div className="w-[1600px] h-[900px] flex flex-col overflow-hidden bg-[#e6e6e6]">
      <TitleBar />
      <TabBar />
      <Ribbon />
      <div className="h-[690px] flex">
        <div className="flex-1 flex flex-col overflow-hidden">
          <HRuler />
          <div className="flex flex-1 overflow-hidden">
            <VRuler />
            <div className="flex-1 ml-[4px] pl-[2px] flex flex-wrap justify-center content-start items-start gap-x-[7px] gap-y-[7px] overflow-hidden">
              <Page1 />
              <Page2 />
              <Page3 />
              <Page4 />
              <Page5 />
            </div>
          </div>
        </div>
        <Scrollbar />
      </div>
      <StatusBar />
      <Taskbar />
    </div>
  );
}
